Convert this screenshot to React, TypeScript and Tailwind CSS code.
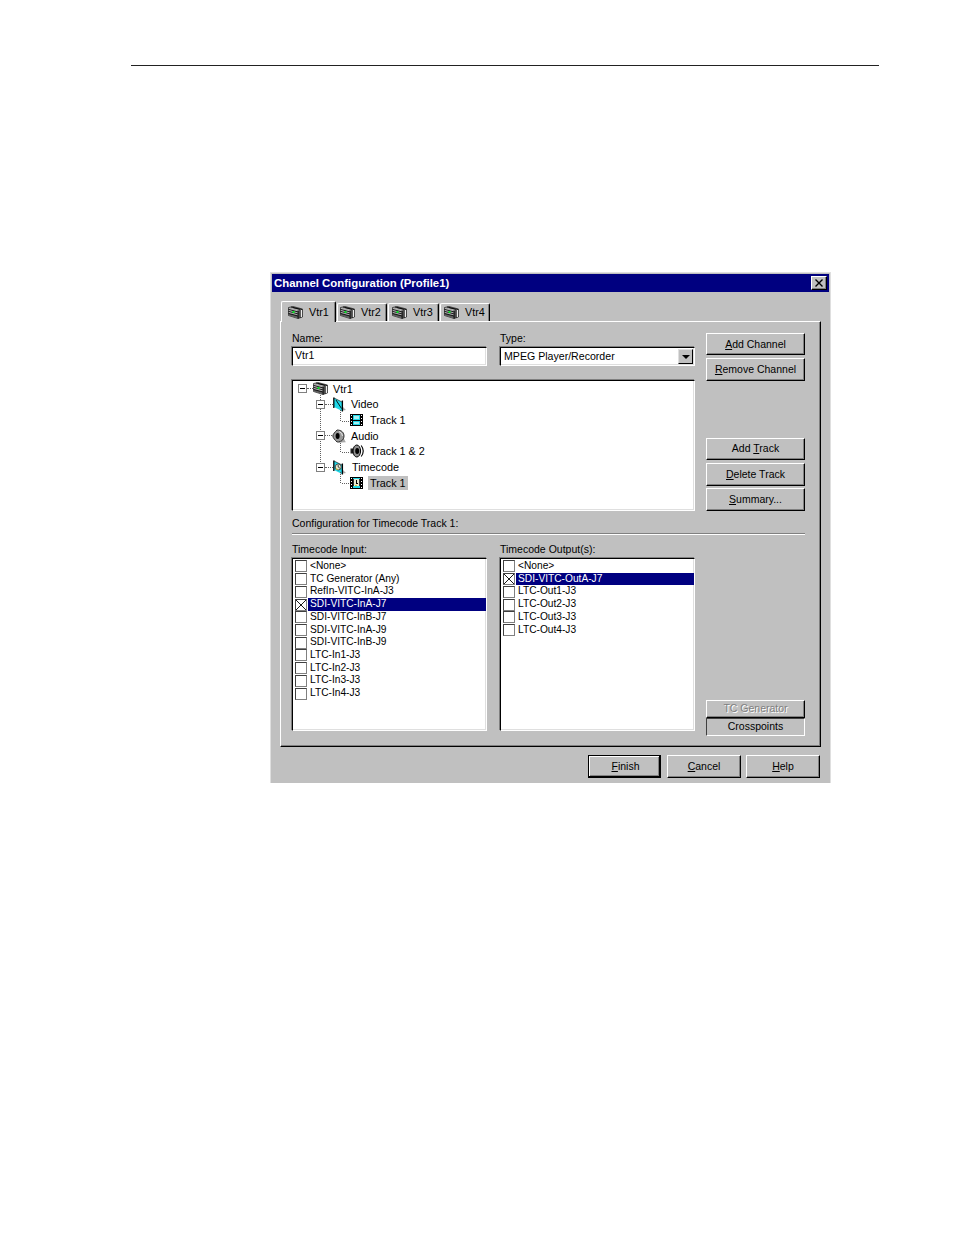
import React from "react";

const F = "font-['Liberation_Sans',Arial,sans-serif]";

function Vtr({ className = "" }: { className?: string }) {
  return (
    <svg viewBox="0 0 15 13" className={`w-[15px] h-[13px] shrink-0 ${className}`}>
      <polygon points="0.5,1.5 5,0.5 14.5,3 14.5,11 10,12.5 0.5,9.5" fill="#a8a8a8" stroke="#000" strokeWidth="0.6" />
      <polygon points="1,2 10,4.5 10,12.5 1,9.5" fill="#606060" />
      <path d="M0.5 3.5 L10 6 M0.5 5.5 L10 8 M0.5 7.5 L10 10 M5 1.5 L14 3.6 M3 1 L12 3.4" stroke="#000" strokeWidth="0.8" fill="none" />
      <path d="M1 2.4 L10 4.9 M1 4.4 L10 6.9 M1 6.4 L10 8.9" stroke="#e8e8e8" strokeWidth="0.6" fill="none" />
      <path d="M10.2 4.5 V12.5 M12 4 V11.8" stroke="#000" strokeWidth="1.1" />
      <path d="M13.4 4 V11" stroke="#fff" strokeWidth="0.9" />
      <rect x="4.5" y="5" width="2" height="2" fill="#00e020" />
    </svg>
  );
}

function VideoFolder({ clock = false }: { clock?: boolean }) {
  return (
    <svg viewBox="0 0 13 15" className="w-[13px] h-[15px] shrink-0">
      <polygon points="7,14 13,13 10,10 9,12" fill="#a8a8a8" />
      <polygon points="1,1 9,5 9,14 1,10" fill="#20d8e8" />
      <path d="M0.8 0.5 V11 M9.4 3.5 V14.5" stroke="#000" strokeWidth="1.3" />
      <path d="M1 1 L9 5" stroke="#000" strokeWidth="0.6" />
      {clock ? (
        <>
          <circle cx="5.2" cy="7" r="3" fill="#e8e8d0" stroke="#303030" strokeWidth="0.8" />
          <path d="M5.2 5 V7 L7 8.3" stroke="#000" strokeWidth="0.7" fill="none" />
          <rect x="3" y="8.6" width="1.5" height="1.2" fill="#d8c820" />
        </>
      ) : (
        <path d="M3 3 L8.5 11.5" stroke="#000" strokeWidth="0.9" />
      )}
    </svg>
  );
}

function Film({ clock = false }: { clock?: boolean }) {
  return (
    <svg viewBox="0 0 13 12" className="w-[13px] h-[12px] shrink-0" shapeRendering="crispEdges">
      <rect x="0" y="0" width="3" height="12" fill="#000" />
      <rect x="10" y="0" width="3" height="12" fill="#000" />
      {[1, 4, 7, 10].map((y) => (
        <React.Fragment key={y}>
          <rect x="1" y={y} width="1" height="1" fill="#fff" />
          <rect x="11" y={y} width="1" height="1" fill="#fff" />
        </React.Fragment>
      ))}
      <rect x="3" y="0" width="7" height="12" fill="#20d8e8" />
      <rect x="3" y="0" width="7" height="1" fill="#000" />
      <rect x="3" y="11" width="7" height="1" fill="#000" />
      {!clock && <rect x="3" y="6" width="7" height="1" fill="#000" />}
      {!clock && <rect x="4" y="2" width="5" height="3" fill="#a8f0f4" />}
      {!clock && <rect x="4" y="8" width="5" height="2" fill="#a8f0f4" />}
      {clock && <rect x="4" y="2" width="5" height="7" fill="#e8e8d0" />}
      {clock && <rect x="6" y="3" width="1" height="3" fill="#000" />}
      {clock && <rect x="6" y="6" width="2" height="1" fill="#000" />}
      {clock && <rect x="3" y="2" width="1" height="7" fill="#303030" />}
      {clock && <rect x="9" y="2" width="1" height="7" fill="#303030" />}
      {clock && <rect x="5" y="8" width="2" height="1" fill="#d8c820" />}
    </svg>
  );
}

function Speaker({ waves = false }: { waves?: boolean }) {
  return (
    <svg viewBox="0 0 14 14" className="w-[14px] h-[14px] shrink-0">
      {!waves && <polygon points="6,13.8 13.8,13.2 11,8" fill="#a8a8a8" />}
      {waves ? (
        <>
          <rect x="0.5" y="4.5" width="4" height="5" fill="#202020" />
          <ellipse cx="6.8" cy="7" rx="3.8" ry="6" fill="#909090" stroke="#000" strokeWidth="1" />
          <ellipse cx="7.2" cy="7" rx="2" ry="3" fill="#000" />
          <path d="M11.2 1.5 C13.8 5 13.8 9 11.2 12.5" stroke="#000" strokeWidth="1.1" fill="none" />
        </>
      ) : (
        <>
          <path d="M5 1 C10 1 12 4 12 7 C12 10 10 13 5 13 C3 11 1 9 0.8 7 C1 5 3 3 5 1 Z" fill="#989898" stroke="#202020" strokeWidth="0.9" />
          <ellipse cx="5.6" cy="7" rx="2" ry="3" fill="#000" />
          <path d="M7 2.5 Q10.5 4 10.5 7" stroke="#e8e8e8" strokeWidth="1" fill="none" />
        </>
      )}
    </svg>
  );
}

function Expander() {
  return (
    <span className="relative w-[9px] h-[9px] border border-[#808080] bg-white shrink-0 flex items-center justify-center">
      <span className="w-[5px] h-px bg-black" />
    </span>
  );
}

function Btn({ children, className = "", disabled = false, h = "h-[23px]" }: { children: React.ReactNode; className?: string; disabled?: boolean; h?: string }) {
  return (
    <div
      className={`${h} flex items-center justify-center border-t border-l border-white border-r border-b border-r-black border-b-black shadow-[inset_-1px_-1px_0_#808080] text-[10.5px] ${disabled ? "text-[#808080] [text-shadow:1px_1px_0_#fff]" : "text-black"} ${className}`}
    >
      <span>{children}</span>
    </div>
  );
}

function Field({ children, className = "" }: { children: React.ReactNode; className?: string }) {
  return (
    <div className={`border-t border-l border-black border-r border-b border-r-white border-b-white shadow-[inset_-1px_-1px_0_#dfdfdf,-1px_-1px_0_#808080] bg-white ${className}`}>
      {children}
    </div>
  );
}

function Tab({ label, className }: { label: string; className: string }) {
  return (
    <div
      className={`relative flex items-center border-t border-l border-white rounded-t-[2px] border-r border-r-black shadow-[inset_-1px_0_0_#808080] bg-[#c0c0c0] gap-[6px] ${className}`}
    >
      <Vtr />
      <span className="text-[10.8px] text-black leading-none">{label}</span>
    </div>
  );
}

function Check({ checked }: { checked?: boolean }) {
  return (
    <span className="w-[12px] h-[12px] border border-t-[#404040] border-l-[#404040] border-r-[#808080] border-b-[#808080] bg-white shrink-0 block">
      {checked && (
        <svg viewBox="0 0 10 10" className="w-full h-full block">
          <path d="M0 0 L10 10 M10 0 L0 10" stroke="#000" strokeWidth="0.9" />
        </svg>
      )}
    </span>
  );
}

function CheckList({ items, selected }: { items: string[]; selected: string }) {
  return (
    <Field className="w-[195px] h-[173px] pt-[1px] pl-[2px] overflow-hidden">
      {items.map((t) => {
        const sel = t === selected;
        return (
          <div key={t} className="flex items-center h-[12.72px]">
            <Check checked={sel} />
            <span
              className={`flex-1 ml-px pl-[2px] h-[12.72px] leading-[12.7px] text-[10.2px] whitespace-nowrap ${
                sel ? "bg-[#000080] text-white" : "text-black"
              }`}
            >
              {t}
            </span>
          </div>
        );
      })}
    </Field>
  );
}

function TreeRow({ indent, exp, expGap = "w-[7px]", icon, label, sel, gap = "ml-[6px]" }: { indent: string; exp?: boolean; expGap?: string; icon: React.ReactNode; label: string; sel?: boolean; gap?: string }) {
  return (
    <div className={`flex items-center h-[15.65px] ${indent}`}>
      {exp && <Expander />}
      {exp && <span className={`${expGap} border-t border-dotted border-[#606060] shrink-0`} />}
      {icon}
      <span
        className={`${gap} text-[10.8px] text-black whitespace-nowrap px-[2px] leading-[14px] ${sel ? "bg-[#c0c0c0]" : ""}`}
      >
        {label}
      </span>
    </div>
  );
}

const inputs = ["<None>", "TC Generator (Any)", "RefIn-VITC-InA-J3", "SDI-VITC-InA-J7", "SDI-VITC-InB-J7", "SDI-VITC-InA-J9", "SDI-VITC-InB-J9", "LTC-In1-J3", "LTC-In2-J3", "LTC-In3-J3", "LTC-In4-J3"];
const outputs = ["<None>", "SDI-VITC-OutA-J7", "LTC-Out1-J3", "LTC-Out2-J3", "LTC-Out3-J3", "LTC-Out4-J3"];

export default function App() {
  return (
    <div className={`${F} w-[954px] h-[1235px] bg-white overflow-hidden pt-[65px]`}>
      <div className="ml-[131px] w-[748px] h-px bg-[#222]" />
      <div className="ml-[270px] mt-[206px] w-[561px] h-[511px] bg-[#c0c0c0] border-t border-l border-r border-[#dfdfdf] pt-[1px] pl-[1px] pr-[1px]">
        {/* title bar */}
        <div className="h-[18px] bg-[#000080] flex items-center justify-between pl-[2px] pr-[2px]">
          <span className="text-white font-bold text-[11.4px] leading-none translate-y-[0.5px]">Channel Configuration (Profile1)</span>
          <div className="w-[16px] h-[14px] bg-[#c0c0c0] border-t border-l border-white border-r border-b border-r-black border-b-black shadow-[inset_-1px_-1px_0_#808080] flex items-center justify-center">
            <svg viewBox="0 0 8 8" className="w-[8px] h-[8px]">
              <path d="M0.5 0.5 L7.5 7.5 M7.5 0.5 L0.5 7.5" stroke="#000" strokeWidth="1.4" />
            </svg>
          </div>
        </div>

        {/* tabs */}
        <div className="mt-[9px] ml-[9px] flex gap-[1px] h-[20px]">
          <Tab label="Vtr1" className="w-[55px] h-[21px] z-10 -mb-px pl-[6px]" />
          <Tab label="Vtr2" className="w-[50px] h-[18px] mt-[2px] pl-[2px]" />
          <Tab label="Vtr3" className="w-[51px] h-[18px] mt-[2px] pl-[3px]" />
          <Tab label="Vtr4" className="w-[50px] h-[18px] mt-[2px] pl-[3px]" />
        </div>

        {/* panel */}
        <div className="ml-[8px] w-[541px] h-[426px] border-t border-l border-white border-r border-b border-r-black border-b-black shadow-[inset_-1px_-1px_0_#808080] pl-[11px]">
          <div className="flex">
            <div className="w-[403px]">
              <div className="flex gap-[13px] pt-[10px]">
                <div className="w-[195px]">
                  <div className="h-[15px] text-[10.5px] leading-[13px] text-black">Name:</div>
                  <Field className="h-[19px] pl-[2px] pb-[1px] flex items-center text-[10.5px] text-black">Vtr1</Field>
                </div>
                <div className="w-[195px]">
                  <div className="h-[15px] text-[10.5px] leading-[13px] text-black">Type:</div>
                  <Field className="h-[19px] pl-[3px] pr-px flex items-center justify-between text-[10.6px] text-black">
                    <span>MPEG Player/Recorder</span>
                    <span className="w-[15px] h-[15px] bg-[#c0c0c0] border-t border-l border-[#dfdfdf] border-r border-b border-r-black border-b-black flex items-center justify-center">
                      <span className="w-0 h-0 border-l-[4px] border-r-[4px] border-t-[4px] border-l-transparent border-r-transparent border-t-black" />
                    </span>
                  </Field>
                </div>
              </div>
              <Field className="mt-[14px] h-[131px] w-[403px] pl-[5px] pt-0">
                <div className="relative">
                  {/* dotted connectors behind the tree's boxes */}
                  <svg className="absolute left-0 top-0 w-[70px] h-[110px] pointer-events-none" viewBox="0 0 70 110" shapeRendering="crispEdges">
                    <g stroke="#606060" strokeDasharray="1 1" fill="none">
                      <path d="M22.5 12 V86" />
                      <path d="M42.5 29 V40 H52" />
                      <path d="M42.5 60 V71 H52" />
                      <path d="M42.5 91 V102 H52" />
                    </g>
                  </svg>
                  <TreeRow indent="" exp expGap="w-[6px]" icon={<Vtr />} label="Vtr1" gap="ml-[3px]" />
                  <TreeRow indent="ml-[18px]" exp expGap="w-[8px]" icon={<VideoFolder />} label="Video" gap="ml-[3px]" />
                  <TreeRow indent="ml-[52px]" icon={<Film />} label="Track 1" gap="ml-[5px]" />
                  <TreeRow indent="ml-[18px]" exp expGap="w-[7px]" icon={<Speaker />} label="Audio" gap="ml-[3px]" />
                  <TreeRow indent="ml-[52px]" icon={<Speaker waves />} label="Track 1 & 2" gap="ml-[4px]" />
                  <TreeRow indent="ml-[18px]" exp expGap="w-[8px]" icon={<VideoFolder clock />} label="Timecode" gap="ml-[4px]" />
                  <TreeRow indent="ml-[52px]" icon={<Film clock />} label="Track 1" sel gap="ml-[5px]" />
                </div>
              </Field>
            </div>
            <div className="ml-[11px] w-[99px] pt-[11px] flex flex-col">
              <Btn h="h-[22px]" className="pt-px"><u>A</u>dd Channel</Btn>
              <Btn className="mt-[3px]"><u>R</u>emove Channel</Btn>
              <Btn h="h-[22px]" className="mt-[57px]">Add <u>T</u>rack</Btn>
              <Btn className="mt-[3px]"><u>D</u>elete Track</Btn>
              <Btn className="mt-[2px]"><u>S</u>ummary...</Btn>
            </div>
          </div>

          <div className="mt-[6px] h-[12px] text-[10.5px] leading-[12px] text-black">Configuration for Timecode Track 1:</div>
          <div className="mt-[4px] w-[513px] h-[2px] border-t border-[#808080] border-b border-b-white" />

          <div className="flex mt-[8px]">
            <div className="w-[403px] flex gap-[13px]">
              <div>
                <div className="h-[15px] text-[10.5px] leading-[13px] text-black">Timecode Input:</div>
                <CheckList items={inputs} selected="SDI-VITC-InA-J7" />
              </div>
              <div>
                <div className="h-[15px] text-[10.5px] leading-[13px] text-black">Timecode Output(s):</div>
                <CheckList items={outputs} selected="SDI-VITC-OutA-J7" />
              </div>
            </div>
            <div className="ml-[11px] w-[99px] flex flex-col justify-end -mb-[5px]">
              <Btn disabled h="h-[18px]">TC Generator</Btn>
              <div className="h-[18px] flex items-center justify-center border-t border-l border-[#404040] border-r border-b border-r-white border-b-white text-[10.5px] text-black">Crosspoints</div>
            </div>
          </div>
        </div>

        {/* footer */}
        <div className="mt-[8px] pr-[9px] flex justify-end">
          <Btn className="w-[73px] mr-[6px] border-t-black border-l-black border-r-2 border-b-2 shadow-[inset_1px_1px_0_#fff,inset_-1px_-1px_0_#808080] pl-[3px] pt-px"><u>F</u>inish</Btn>
          <Btn className="w-[74px] mr-[5px]"><u>C</u>ancel</Btn>
          <Btn className="w-[74px]"><u>H</u>elp</Btn>
        </div>
      </div>
    </div>
  );
}
